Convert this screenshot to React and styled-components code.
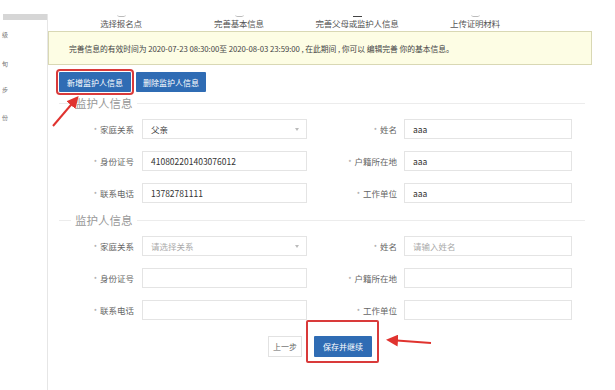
import styled, { createGlobalStyle } from "styled-components";

const GlobalStyle = createGlobalStyle`
  html, body {
    margin: 0;
    padding: 0;
    background: #fff;
  }
  body {
    font-family: "Noto Sans CJK SC", "Liberation Sans", sans-serif;
    color: #333;
  }
`;

const Page = styled.div`
  position: relative;
  display: flex;
  width: 615px;
  height: 390px;
  overflow: hidden;
  background: #fff;
`;

const Sidebar = styled.aside`
  width: 48px;
  flex: none;
  padding-top: 14px;
  border-right: 1px solid #e6e6e6;
  margin-top: 14px;
  box-sizing: border-box;
`;

const SideBar = styled.div`
  height: 6px;
  margin: -14px 0 0 3px;
  background: #d6d6d6;
`;

const SideItem = styled.div`
  margin: ${(p) => p.$top}px 0 0 2px;
  font-size: 6px;
  line-height: 8px;
  color: #777;
`;

const Main = styled.main`
  flex: 1;
  padding-right: 23px;
  display: flex;
  flex-direction: column;
`;

const Steps = styled.div`
  display: grid;
  grid-template-columns: repeat(4, 118px);
  margin-left: 14px;
  height: 31px;
`;

const Step = styled.div`
  display: flex;
  flex-direction: column;
  align-items: center;
  padding-top: 13px;
  font-size: 8.5px;
  color: #555;
  letter-spacing: -0.2px;
`;

const StepMark = styled.span`
  width: 9px;
  height: 3px;
  border-bottom: 1px solid ${(p) => (p.$active ? "#444" : "#bbb")};
  border-radius: ${(p) => (p.$active ? "0" : "0 0 50% 50%")};
`;

const Notice = styled.div`
  height: 34px;
  box-sizing: border-box;
  display: flex;
  align-items: center;
  padding-left: 20px;
  border: 1px solid #d9d8b4;
  background: #fdfde4;
  font-size: 7.8px;
  letter-spacing: -0.05px;
  color: #444;
  white-space: nowrap;
`;

const Actions = styled.div`
  display: flex;
  gap: 5px;
  margin: 7px 0 0 11px;
`;

const BlueButton = styled.button`
  display: block;
  height: ${(p) => p.$h || 20}px;
  width: ${(p) => p.$w}px;
  padding: 0;
  border: none;
  border-radius: 1px;
  background: #2f6cb4;
  color: #fff;
  font-family: inherit;
  font-size: 8px;
  outline: ${(p) => (p.$marked ? "2px solid #d93a3a" : "none")};
  outline-offset: 1px;
`;

const Section = styled.section`
  display: flex;
  flex-direction: column;
  gap: 12px;
  margin-top: ${(p) => p.$top}px;
`;

const SectionTitle = styled.div`
  display: flex;
  align-items: center;
  height: 14px;
  margin-left: 11px;
  margin-right: 7px;
  margin-bottom: -3px;
  font-size: 11.5px;
  color: #999;
  &::before {
    content: "";
    width: 12px;
    border-top: 1px solid #ececec;
    margin-right: 4px;
  }
  &::after {
    content: "";
    flex: 1;
    border-top: 1px solid #ececec;
    margin-left: 4px;
  }
`;

const Row = styled.div`
  display: grid;
  grid-template-columns: 94px 165px 97px 168px;
  align-items: center;
  height: 20px;
`;

const Label = styled.label`
  text-align: right;
  padding-right: ${(p) => p.$pad}px;
  font-size: 8.5px;
  color: #666;
  white-space: nowrap;
  &::before {
    content: "*";
    margin-right: 3px;
    color: #999;
    font-size: 7px;
  }
`;

const Field = styled.div`
  position: relative;
  height: 20px;
  box-sizing: border-box;
  display: flex;
  align-items: center;
  padding-left: 8px;
  border: 1px solid #e4e4e4;
  background: #fff;
  font-size: 8.5px;
  color: ${(p) => (p.$placeholder ? "#aaa" : "#333")};
`;

const Caret = styled.span`
  position: absolute;
  right: 7px;
  top: 8px;
  width: 0;
  height: 0;
  border-left: 2.5px solid transparent;
  border-right: 2.5px solid transparent;
  border-top: 3px solid #bbb;
`;

const Footer = styled.div`
  display: flex;
  justify-content: center;
  align-items: flex-start;
  gap: 12px;
  margin-top: 16px;
`;

const GhostButton = styled.button`
  display: block;
  height: 21px;
  width: 34px;
  padding: 0;
  border: 1px solid #e2e2e2;
  background: #fff;
  color: #666;
  font-family: inherit;
  font-size: 8px;
`;

const Marked = styled.div`
  position: relative;
  display: flex;
  &::after {
    content: "";
    position: absolute;
    left: -8px;
    right: -7px;
    top: -16px;
    bottom: -6px;
    border: 2px solid #d93a3a;
    border-radius: 2px;
    pointer-events: none;
  }
`;

const Arrows = styled.svg`
  position: absolute;
  left: 0;
  top: 0;
  pointer-events: none;
`;

const rowsFilled = [
  ["家庭关系", { v: "父亲", select: true }, "姓名", { v: "aaa" }],
  ["身份证号", { v: "410802201403076012" }, "户籍所在地", { v: "aaa" }],
  ["联系电话", { v: "13782781111" }, "工作单位", { v: "aaa" }],
];

const rowsEmpty = [
  ["家庭关系", { v: "请选择关系", select: true, ph: true }, "姓名", { v: "请输入姓名", ph: true }],
  ["身份证号", { v: "" }, "户籍所在地", { v: "" }],
  ["联系电话", { v: "" }, "工作单位", { v: "" }],
];

function FormRow({ row }) {
  const [l1, f1, l2, f2] = row;
  return (
    <Row>
      <Label $pad={8}>{l1}</Label>
      <Field $placeholder={f1.ph}>
        {f1.v}
        {f1.select && <Caret />}
      </Field>
      <Label $pad={7}>{l2}</Label>
      <Field $placeholder={f2.ph}>{f2.v}</Field>
    </Row>
  );
}

export default function App() {
  return (
    <>
      <GlobalStyle />
      <Page>
        <Sidebar>
          <SideBar />
          <SideItem $top={11}>级</SideItem>
          <SideItem $top={21}>旬</SideItem>
          <SideItem $top={18}>步</SideItem>
          <SideItem $top={20}>份</SideItem>
        </Sidebar>
        <Main>
          <Steps>
            {["选择报名点", "完善基本信息", "完善父母或监护人信息", "上传证明材料"].map((s, i) => (
              <Step key={s}>
                <StepMark $active={i === 2} />
                {s}
              </Step>
            ))}
          </Steps>
          <Notice>
            完善信息的有效时间为 2020-07-23 08:30:00至 2020-08-03 23:59:00 , 在此期间 , 你可以 编辑完善 你的基本信息。
          </Notice>
          <Actions>
            <BlueButton $w={72} $marked>新增监护人信息</BlueButton>
            <BlueButton $w={70}>删除监护人信息</BlueButton>
          </Actions>
          <Section $top={4}>
            <SectionTitle>监护人信息</SectionTitle>
            {rowsFilled.map((r) => (
              <FormRow key={r[0]} row={r} />
            ))}
          </Section>
          <Section $top={10}>
            <SectionTitle>监护人信息</SectionTitle>
            {rowsEmpty.map((r) => (
              <FormRow key={r[0]} row={r} />
            ))}
          </Section>
          <Footer>
            <GhostButton>上一步</GhostButton>
            <Marked>
              <BlueButton $w={58} $h={21}>保存并继续</BlueButton>
            </Marked>
          </Footer>
        </Main>
        <Arrows width="615" height="390" viewBox="0 0 615 390">
          <defs>
            <marker id="head" markerWidth="6" markerHeight="6" refX="4" refY="3" orient="auto">
              <path d="M0,0 L6,3 L0,6 Z" fill="#e0332f" />
            </marker>
          </defs>
          <line x1="53" y1="126" x2="76" y2="99" stroke="#e0332f" strokeWidth="2" markerEnd="url(#head)" />
          <line x1="431" y1="343" x2="390" y2="340" stroke="#e0332f" strokeWidth="2" markerEnd="url(#head)" />
        </Arrows>
      </Page>
    </>
  );
}
